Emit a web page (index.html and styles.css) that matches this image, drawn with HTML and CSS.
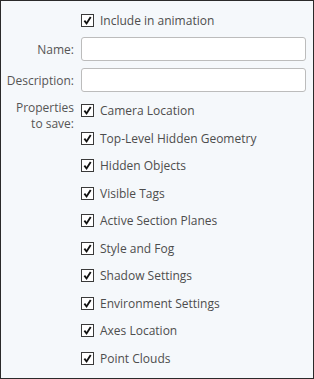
FILE: index.html
```html
<!DOCTYPE html>
<html>
<head>
    <title>Scene Properties</title>
    <link rel="stylesheet" href="styles.css">
</head>
<body>
<div class="panel">
    <div class="row top-row">
        <span class="label"></span>
        <label class="check"><span class="box"><svg viewBox="0 0 13 13"><path d="M2.8 6.6 L5.4 10 L10.3 2.4"/></svg></span>Include in animation</label>
    </div>

    <div class="row field-row">
        <span class="label">Name:</span>
        <input type="text" class="field">
    </div>

    <div class="row field-row desc-row">
        <span class="label">Description:</span>
        <input type="text" class="field">
    </div>

    <div class="row props">
        <span class="label multi">Properties<br>to save:</span>
        <div class="list">
            <label class="check"><span class="box"><svg viewBox="0 0 13 13"><path d="M2.8 6.6 L5.4 10 L10.3 2.4"/></svg></span>Camera Location</label>
            <label class="check"><span class="box"><svg viewBox="0 0 13 13"><path d="M2.8 6.6 L5.4 10 L10.3 2.4"/></svg></span>Top-Level Hidden Geometry</label>
            <label class="check"><span class="box"><svg viewBox="0 0 13 13"><path d="M2.8 6.6 L5.4 10 L10.3 2.4"/></svg></span>Hidden Objects</label>
            <label class="check"><span class="box"><svg viewBox="0 0 13 13"><path d="M2.8 6.6 L5.4 10 L10.3 2.4"/></svg></span>Visible Tags</label>
            <label class="check"><span class="box"><svg viewBox="0 0 13 13"><path d="M2.8 6.6 L5.4 10 L10.3 2.4"/></svg></span>Active Section Planes</label>
            <label class="check"><span class="box"><svg viewBox="0 0 13 13"><path d="M2.8 6.6 L5.4 10 L10.3 2.4"/></svg></span>Style and Fog</label>
            <label class="check"><span class="box"><svg viewBox="0 0 13 13"><path d="M2.8 6.6 L5.4 10 L10.3 2.4"/></svg></span>Shadow Settings</label>
            <label class="check"><span class="box"><svg viewBox="0 0 13 13"><path d="M2.8 6.6 L5.4 10 L10.3 2.4"/></svg></span>Environment Settings</label>
            <label class="check"><span class="box"><svg viewBox="0 0 13 13"><path d="M2.8 6.6 L5.4 10 L10.3 2.4"/></svg></span>Axes Location</label>
            <label class="check"><span class="box"><svg viewBox="0 0 13 13"><path d="M2.8 6.6 L5.4 10 L10.3 2.4"/></svg></span>Point Clouds</label>
        </div>
    </div>
</div>
</body>
</html>
```

FILE: styles.css
```css
body {
    margin: 0;
    padding: 0;
    font-family: "Open Sans", sans-serif;
    font-size: 12px;
    color: #4d4d4d;
}
.panel {
    width: 314px;
    height: 379px;
    box-sizing: border-box;
    border: 1px solid #2a2a2a;
    background-color: #f5f8fb;
    padding: 6px 7px 0 0;
}
.row {
    display: grid;
    grid-template-columns: 73px 1fr;
    column-gap: 7px;
    align-items: center;
}
.top-row {
    height: 27px;
}
.field-row {
    margin-top: 3px;
}
.desc-row {
    margin-top: 7px;
}
.props {
    margin-top: 5px;
    align-items: start;
}
.label {
    text-align: right;
    color: #555;
}
.label.multi {
    padding-top: 3px;
    line-height: 16px;
}
.field {
    height: 24px;
    box-sizing: border-box;
    margin: 0;
    border: 1px solid #bcbcbc;
    border-radius: 3px;
    background-color: #fff;
}
.list {
    display: flex;
    flex-direction: column;
}
.check {
    display: flex;
    align-items: center;
    gap: 6px;
    height: 27.5px;
}
.top-row .check {
    height: 27px;
}
.box {
    width: 13px;
    height: 13px;
    box-sizing: border-box;
    border: 1px solid #3a3a3a;
    background-color: #fff;
    display: flex;
}
.box svg {
    width: 11px;
    height: 11px;
}
.box path {
    fill: none;
    stroke: #111;
    stroke-width: 2.2;
}
```
